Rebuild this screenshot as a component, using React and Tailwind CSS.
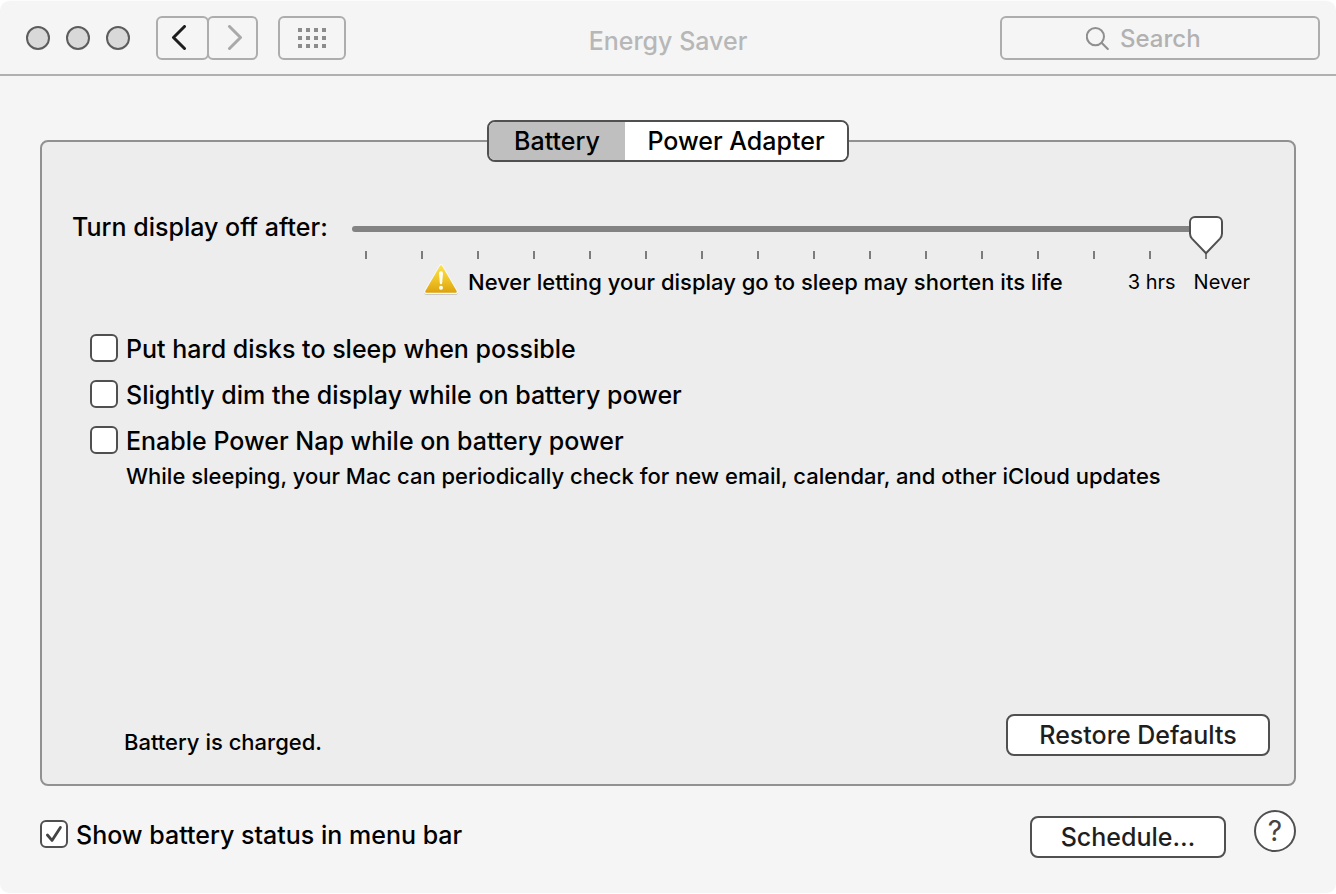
import { useState } from "react";

const TICKS = Array.from({ length: 16 }, (_, i) => i);

function CheckRow({ id, label, checked, onChange }) {
  return (
    <div className="flex items-center gap-2">
      <span className="grid h-7 w-7 shrink-0">
        <input
          id={id}
          type="checkbox"
          checked={checked}
          onChange={(e) => onChange(e.target.checked)}
          className="col-start-1 row-start-1 h-7 w-7 appearance-none rounded-md border-2 border-[#505050] bg-white"
        />
        {checked && (
          <svg viewBox="0 0 28 28" className="pointer-events-none col-start-1 row-start-1 h-7 w-7" fill="none" stroke="#444" strokeWidth="2.8" strokeLinecap="round" strokeLinejoin="round" aria-hidden="true">
            <path d="M7.4 15 12 20.4 20.4 7.4" />
          </svg>
        )}
      </span>
      <label htmlFor={id} className="pt-[2px] text-[25px] leading-[26px] font-[450]">{label}</label>
    </div>
  );
}

function WarningIcon() {
  return (
    <svg viewBox="0 0 36 34" className="h-[34px] w-9 shrink-0 self-start" aria-hidden="true">
      <defs>
        <linearGradient id="warn" x1="0" y1="0" x2="0" y2="1">
          <stop offset="0" stopColor="#fbe04a" />
          <stop offset="0.5" stopColor="#f0c62a" />
          <stop offset="1" stopColor="#dfa510" />
        </linearGradient>
      </defs>
      <path d="M18 4 33 30H3Z" fill="#bdbdbd" stroke="#bdbdbd" strokeWidth="3.6" strokeLinejoin="round" />
      <path d="M18 3.2 33 29H3Z" fill="#fafafa" stroke="#fafafa" strokeWidth="4" strokeLinejoin="round" />
      <path d="M18 3.4 32.6 28.6H3.4Z" fill="url(#warn)" stroke="url(#warn)" strokeWidth="2.4" strokeLinejoin="round" />
      <path d="M16 10.2a2 2 0 0 1 4 0L19.2 20a1.2 1.2 0 0 1-2.4 0Z" fill="#fffdf0" />
      <circle cx="18" cy="24.7" r="2" fill="#fffdf0" />
    </svg>
  );
}

function DisplaySlider() {
  const [value, setValue] = useState(15);
  return (
    <div className="relative flex-1">
      <div className="flex h-[38px] items-start pt-[10px] pr-4 pl-[3px]">
        <div className="h-[6px] w-full rounded-full bg-[#838383]" />
      </div>
      <div className="-mt-[3px] flex justify-between px-4">
        {TICKS.map((t) => (
          <span key={t} className="h-2 w-[2px] bg-[#7c7c7c]" />
        ))}
      </div>
      <div className="pointer-events-none absolute inset-y-0 right-[34px] left-0">
        <svg viewBox="0 0 34 40" className="absolute top-0 h-10 w-[34px]" style={{ left: `${(value / 15) * 100}%` }} aria-hidden="true">
          <path d="M6 1H28A5 5 0 0 1 33 6V17.6Q33 20.4 31 22.6L17 37.2 3 22.6Q1 20.4 1 17.6V6A5 5 0 0 1 6 1Z" fill="#fff" stroke="#505050" strokeWidth="2" strokeLinejoin="round" />
        </svg>
      </div>
      <input
        id="display-off"
        type="range"
        min="0"
        max="15"
        value={value}
        onChange={(e) => setValue(Number(e.target.value))}
        className="absolute inset-x-0 top-0 h-10 w-full opacity-0"
      />
    </div>
  );
}

export default function App() {
  const [tab, setTab] = useState("battery");
  const [disks, setDisks] = useState(false);
  const [dim, setDim] = useState(false);
  const [nap, setNap] = useState(false);
  const [status, setStatus] = useState(true);

  return (
    <div className="min-h-screen bg-white font-['Inter','Liberation_Sans',sans-serif] text-black">
      <div className="flex min-h-screen flex-col rounded-[10px] border-y border-[#fcfcfc] bg-[#f5f5f5]">
        <header className="grid grid-cols-[1fr_auto_1fr] items-start border-b-2 border-[#b0b0b0] px-4 pt-[15px] pb-[10px]">
          <div className="flex h-11 items-center pl-[10px]">
            <div className="flex gap-4">
              <button aria-label="Close" className="h-6 w-6 rounded-full border-2 border-[#5c5c5c] bg-[#d9d9d9]" />
              <button aria-label="Minimize" className="h-6 w-6 rounded-full border-2 border-[#5c5c5c] bg-[#d9d9d9]" />
              <button aria-label="Zoom" className="h-6 w-6 rounded-full border-2 border-[#5c5c5c] bg-[#d9d9d9]" />
            </div>
            <div className="ml-[26px] flex">
              <button aria-label="Back" className="flex h-11 w-[53px] items-center justify-center rounded-md border-2 border-[#adadad]">
                <svg viewBox="0 0 16 26" className="mr-2 h-[26px] w-4" fill="none" stroke="#1e1e1e" strokeWidth="3" strokeLinecap="round" strokeLinejoin="round" aria-hidden="true">
                  <path d="M13.5 1.5 2.5 12.5 13.5 23.5" />
                </svg>
              </button>
              <button aria-label="Forward" className="-ml-[2px] flex h-11 w-[51px] items-center justify-center rounded-md border-2 border-[#adadad]">
                <svg viewBox="0 0 16 26" className="ml-1 h-[26px] w-4" fill="none" stroke="#a9a9a9" strokeWidth="3" strokeLinecap="round" strokeLinejoin="round" aria-hidden="true">
                  <path d="M2.5 1.5 13.5 12.5 2.5 23.5" />
                </svg>
              </button>
            </div>
            <button aria-label="Show All" className="ml-5 flex h-11 w-[68px] items-center justify-center rounded-md border-2 border-[#adadad]">
              <svg viewBox="0 0 28 20" className="h-5 w-7" fill="#8c8c8c" aria-hidden="true">
                {[0, 8, 16].map((y) => [0, 8, 16, 24].map((x) => <rect key={`${x}-${y}`} x={x} y={y} width="4" height="4" />))}
              </svg>
            </button>
          </div>
          <h1 className="pt-[2px] text-[25px] leading-[46px] font-medium text-[#b7b7b7]">Energy Saver</h1>
          <label className="flex h-11 w-80 items-center gap-[10px] justify-self-end rounded-md border-2 border-[#adadad] pl-[84px]">
            <svg viewBox="0 0 24 24" className="h-6 w-6 shrink-0" fill="none" stroke="#8f8f8f" strokeWidth="2" strokeLinecap="round" aria-hidden="true">
              <circle cx="9.4" cy="10.6" r="8.6" />
              <path d="m15.8 17 6 6" />
            </svg>
            <input type="search" placeholder="Search" aria-label="Search" className="w-full min-w-0 bg-transparent pt-[2px] text-2xl leading-8 font-[450] outline-none placeholder:text-[#b1b1b1]" />
          </label>
        </header>

        <main className="flex flex-1 flex-col px-10 pt-11">
          <div role="tablist" className="relative z-10 flex h-[42px] self-center overflow-hidden rounded-lg border-2 border-[#505050] bg-white text-[25px] leading-9 font-[450]">
            <button role="tab" aria-selected={tab === "battery"} onClick={() => setTab("battery")} className={`w-[136px] ${tab === "battery" ? "bg-[#bfbfbf]" : "bg-white"}`}>Battery</button>
            <button role="tab" aria-selected={tab === "adapter"} onClick={() => setTab("adapter")} className={`w-[222px] ${tab === "adapter" ? "bg-[#bfbfbf]" : "bg-white"}`}>Power Adapter</button>
          </div>

          <section className="-mt-[22px] flex flex-1 flex-col rounded-lg border-2 border-[#919191] bg-[#ededed] pt-[74px] pb-7">
            <div className="flex items-start pr-[71px] pl-[30px]">
              <label htmlFor="display-off" className="w-[277px] text-[25px] leading-[22px] font-[450] whitespace-nowrap">Turn display off after:</label>
              <DisplaySlider />
            </div>
            <div className="mt-1 flex h-[38px] items-center pr-11 pl-[381px]">
              <WarningIcon />
              <p className="ml-[9px] text-[22px] leading-8 font-[450] whitespace-nowrap">Never letting your display go to sleep may shorten its life</p>
              <div className="ml-auto flex gap-[18px] text-xl leading-8 whitespace-nowrap">
                <span>3 hrs</span>
                <span>Never</span>
              </div>
            </div>

            <div className="mt-[33px] flex flex-col gap-[18px] pl-12">
              <CheckRow id="disks" label="Put hard disks to sleep when possible" checked={disks} onChange={setDisks} />
              <CheckRow id="dim" label="Slightly dim the display while on battery power" checked={dim} onChange={setDim} />
              <CheckRow id="nap" label="Enable Power Nap while on battery power" checked={nap} onChange={setNap} />
            </div>
            <p className="mt-2 pl-[84px] text-[22px] leading-7 font-[450]">While sleeping, your Mac can periodically check for new email, calendar, and other iCloud updates</p>

            <div className="mt-auto flex items-end justify-between pr-6 pl-[82px]">
              <p className="text-[22px] leading-7 font-[450]">Battery is charged.</p>
              <button className="h-[42px] w-[264px] rounded-lg border-2 border-[#505050] bg-white text-[25px] leading-9 font-[450] text-[#1e1e1e]">Restore Defaults</button>
            </div>
          </section>
        </main>

        <footer className="flex items-start px-10 pt-6 pb-[35px]">
          <div className="pt-[10px]">
            <CheckRow id="status" label="Show battery status in menu bar" checked={status} onChange={setStatus} />
          </div>
          <div className="ml-auto flex gap-7">
            <button className="mt-[6px] h-[42px] w-[196px] rounded-lg border-2 border-[#505050] bg-white text-[25px] leading-9 font-[450] text-[#1e1e1e]">Schedule…</button>
            <button aria-label="Help" className="h-[42px] w-[42px] rounded-full border-2 border-[#505050] bg-white text-[28px] leading-9 text-[#444]">?</button>
          </div>
        </footer>
      </div>
    </div>
  );
}
